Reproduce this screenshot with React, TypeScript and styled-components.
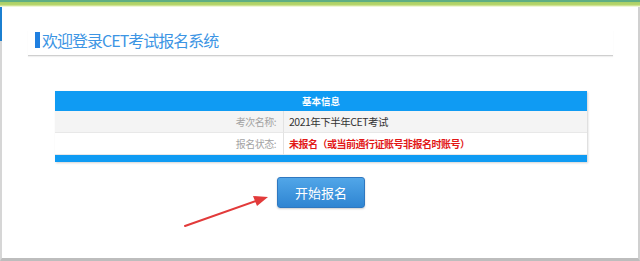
import React from "react";
import styled, { createGlobalStyle } from "styled-components";

const Global = createGlobalStyle`
  html, body { margin: 0; padding: 0; background: #fff; }
  body { font-family: "Noto Sans CJK SC", "Noto Sans", sans-serif; }
`;

const Page = styled.div`
  width: 640px;
  height: 261px;
  box-sizing: border-box;
  position: relative;
  overflow: hidden;
  display: flex;
  flex-direction: column;
`;

const TopBar = styled.div`
  height: 7px;
  flex: none;
  background: linear-gradient(to bottom, #5fae84 0, #5fae84 2px, #a9cf66 2px, #b8d66c 5px, #e4efb8 6px, #fafdf0 7px);
`;

const Frame = styled.div`
  flex: 1;
  position: relative;
  border-left: 2px solid #d6d6d6;
  border-right: 2px solid #d0d0d0;
  border-bottom: 3px solid #bdbdbd;
  padding: 0 25px 0 26px;
  display: flex;
  flex-direction: column;
  &::before {
    content: "";
    position: absolute;
    left: -2px;
    top: 0;
    width: 2px;
    height: 34px;
    background: #1b7fd0;
  }
`;

const TitleRow = styled.div`
  margin-top: 23px;
  padding: 0 0 5px 7px;
  border-bottom: 1px solid #cfcfcf;
  box-shadow: 0 1px 1px rgba(0, 0, 0, 0.06);
  display: flex;
  align-items: center;
`;

const TitleMark = styled.span`
  display: inline-block;
  width: 5px;
  height: 16px;
  background: #1f7fe0;
  margin-right: 2px;
`;

const Title = styled.h1`
  margin: 0;
  font-size: 16px;
  font-weight: 400;
  line-height: 20px;
  color: #3c95e4;
  letter-spacing: -1px;
`;

const TableWrap = styled.div`
  margin: 35px 0 0 27px;
  width: 532px;
  box-shadow: 1px 1px 2px rgba(0, 0, 0, 0.18);
`;

const Table = styled.div`
  display: grid;
  grid-template-columns: 229px 1fr;
  font-size: 10px;
  letter-spacing: -0.5px;
`;

const Header = styled.div`
  grid-column: 1 / -1;
  background: #0f9bf3;
  color: #fff;
  font-weight: 700;
  text-align: center;
  height: 20px;
  line-height: 20px;
  font-size: 9.5px;
  letter-spacing: 0;
`;

const Label = styled.div<{ $alt?: boolean }>`
  background: ${(p) => (p.$alt ? "#f4f4f4" : "#fff")};
  color: #a3a3a3;
  text-align: right;
  height: 21px;
  line-height: 21px;
  padding-right: 7px;
  border-right: 1px solid #e2e2e2;
  border-bottom: 1px solid #e8e8e8;
`;

const Value = styled.div<{ $alt?: boolean; $warn?: boolean }>`
  background: ${(p) => (p.$alt ? "#f4f4f4" : "#fff")};
  color: ${(p) => (p.$warn ? "#e21818" : "#333")};
  font-weight: ${(p) => (p.$warn ? 700 : 400)};
  font-size: ${(p) => (p.$warn ? "10px" : "10.5px")};
  height: 21px;
  line-height: 21px;
  padding-left: 5px;
  border-bottom: 1px solid #e8e8e8;
`;

const Footer = styled.div`
  grid-column: 1 / -1;
  height: 7px;
  background: #0f9bf3;
`;

const ButtonRow = styled.div`
  display: flex;
  justify-content: flex-start;
  padding-left: 249px;
  margin-top: 15px;
`;

const StartButton = styled.button`
  width: 88px;
  height: 31px;
  border: 1px solid #2f78c0;
  border-radius: 3px;
  background: linear-gradient(to bottom, #51a6e8, #2f85d2);
  color: #fff;
  font-family: "Noto Sans CJK SC", sans-serif;
  font-size: 13px;
  cursor: pointer;
  box-shadow: 0 1px 2px rgba(0, 0, 0, 0.2);
`;

const Arrow = styled.svg`
  position: absolute;
  left: 0;
  top: 0;
  pointer-events: none;
`;

export default function App() {
  return (
    <>
      <Global />
      <Page>
        <TopBar />
        <Frame>
          <TitleRow>
            <TitleMark />
            <Title>欢迎登录CET考试报名系统</Title>
          </TitleRow>
          <TableWrap>
            <Table>
              <Header>基本信息</Header>
              <Label $alt>考次名称:</Label>
              <Value $alt>2021年下半年CET考试</Value>
              <Label>报名状态:</Label>
              <Value $warn>未报名（或当前通行证账号非报名时账号）</Value>
              <Footer />
            </Table>
          </TableWrap>
          <ButtonRow>
            <StartButton>开始报名</StartButton>
          </ButtonRow>
        </Frame>
        <Arrow width="640" height="261" viewBox="0 0 640 261">
          <line x1="185" y1="226" x2="256" y2="201" stroke="#e23a3a" strokeWidth="2" strokeLinecap="round" />
          <polygon points="268,197 253,196 257,206" fill="#e23a3a" />
        </Arrow>
      </Page>
    </>
  );
}
